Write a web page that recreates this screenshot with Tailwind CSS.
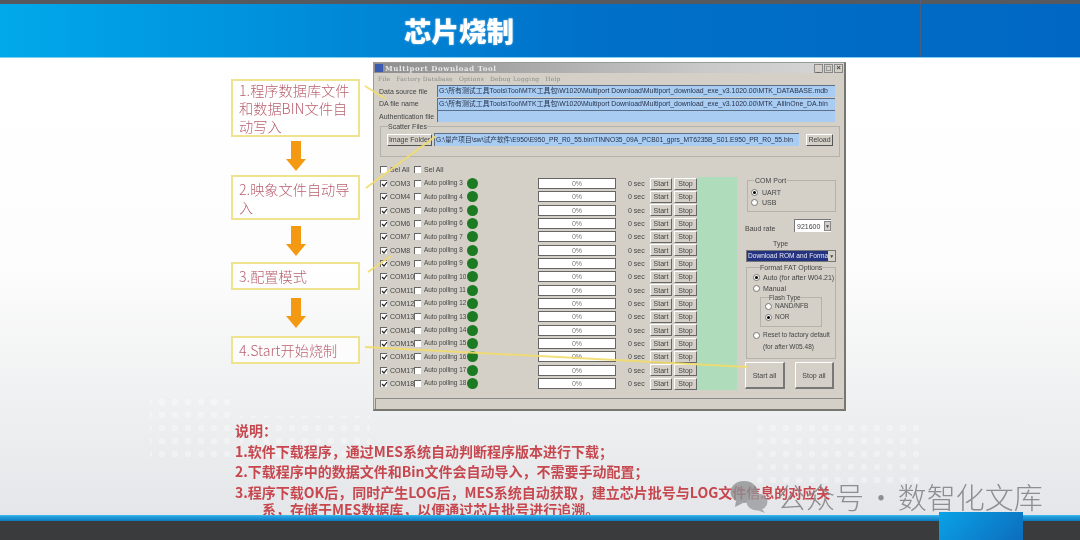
<!DOCTYPE html>
<html lang="zh">
<head>
<meta charset="utf-8">
<title>芯片烧制</title>
<script src="https://cdn.jsdelivr.net/npm/@tailwindcss/browser@4"></script>
</head>
<body class="m-0 bg-white">
<div class="relative w-[1080px] h-[540px] overflow-hidden flex flex-col font-['Liberation_Sans','Noto_Sans_CJK_SC',sans-serif]">
  <!-- top strip -->
  <div class="h-[4px] shrink-0 bg-[#565a5e]"></div>
  <!-- header -->
  <header class="relative h-[54px] shrink-0 border-b border-[#7fd0f0] bg-[linear-gradient(90deg,#00a9ea_0%,#0090dc_25%,#0070c8_55%,#0068c4_100%)] flex items-center pl-[404px]">
    <h1 class="text-[27.5px] leading-none font-black text-white font-['Noto_Sans_CJK_SC',sans-serif] [text-shadow:0_0_2px_rgba(255,255,255,.6)] blur-[0.4px]">芯片烧制</h1>
    <div class="absolute left-[920px] -top-[4px] bottom-0 w-[1px] bg-[#4a5f80]"></div>
  </header>

  <!-- slide body -->
  <main class="relative flex-1 min-h-0 overflow-hidden bg-[linear-gradient(180deg,#ffffff_0%,#fdfdfd_45%,#eeeff0_78%,#e5e6e9_100%)]">
    <svg class="absolute left-0 top-0" width="1080" height="460" aria-hidden="true">
      <defs><pattern id="d" width="13" height="13" patternUnits="userSpaceOnUse"><rect x="3" y="3" width="6" height="6" rx="2" fill="#ffffff" opacity=".3"/></pattern></defs>
      <rect x="150" y="340" width="80" height="60" fill="url(#d)"/>
      <rect x="240" y="358" width="130" height="50" fill="url(#d)"/>
      <rect x="750" y="360" width="170" height="70" fill="url(#d)"/>
    </svg>

    <div class="relative flex pl-[231px] h-[369px]">
      <!-- callouts column -->
      <div class="w-[129px] pt-[21px] flex flex-col items-center font-['Noto_Sans_CJK_SC',sans-serif] font-light text-[14.2px] leading-[18px] text-[#b9616f] blur-[0.3px]">
        <div class="w-full h-[58px] border-2 border-[#efe38e] bg-white/70 pl-[6px] pr-0 flex items-center">1.程序数据库文件和数据BIN文件自动写入</div>
        <div class="h-[38px] flex items-center"><svg width="20" height="30" viewBox="0 0 20 30"><path d="M5 0h10v18h5L10 30 0 18h5z" fill="#f39a12"/></svg></div>
        <div class="w-full h-[45px] border-2 border-[#efe38e] bg-white/70 pl-[6px] pr-0 flex items-center">2.映象文件自动导入</div>
        <div class="h-[42px] flex items-center"><svg width="20" height="30" viewBox="0 0 20 30"><path d="M5 0h10v18h5L10 30 0 18h5z" fill="#f39a12"/></svg></div>
        <div class="w-full h-[28px] border-2 border-[#efe38e] bg-white/70 pl-[6px] pr-0 flex items-center">3.配置模式</div>
        <div class="h-[46px] flex items-center"><svg width="20" height="30" viewBox="0 0 20 30"><path d="M5 0h10v18h5L10 30 0 18h5z" fill="#f39a12"/></svg></div>
        <div class="w-full h-[28px] border-2 border-[#efe38e] bg-white/70 pl-[6px] pr-0 flex items-center">4.Start开始烧制</div>
      </div>

      <!-- tool window -->
      <section class="ml-[13px] mt-[4px] w-[473px] h-[349px] shrink-0 bg-[#d4d0c8] border border-[#9a9a96] border-r-2 border-b-2 border-r-[#77776f] border-b-[#77776f] flex flex-col text-[7px] leading-none text-[#444] blur-[0.45px]">
        <div class="h-[10px] shrink-0 bg-[linear-gradient(90deg,#8e8e8e,#c9c9c9_70%,#d6d6d6)] flex items-center pl-[1px] pr-[1px]">
          <span class="w-[8px] h-[8px] bg-[#3a5bb0] mr-[2px]"></span>
          <span class="font-['DejaVu_Serif',serif] font-bold text-[7px] tracking-[0.6px] text-[#e8e8e8]">Multiport Download Tool</span>
          <span class="ml-auto flex gap-[1px]">
            <span class="w-[9px] h-[9px] bg-[#d4d0c8] border border-[#888] text-[7px] flex items-end justify-center">_</span>
            <span class="w-[9px] h-[9px] bg-[#d4d0c8] border border-[#888] flex items-center justify-center"><span class="w-[5px] h-[5px] border border-[#999]"></span></span>
            <span class="w-[9px] h-[9px] bg-[#d4d0c8] border border-[#888] text-[8px] font-bold flex items-center justify-center">×</span>
          </span>
        </div>
        <div class="h-[11px] shrink-0 flex items-center pl-[4px] gap-[6px] font-['DejaVu_Serif',serif] text-[6px] tracking-[0.2px] text-[#8a8a86]">
          <span>File</span><span>Factory Database</span><span>Options</span><span>Debug Logging</span><span>Help</span>
        </div>
        <div class="flex flex-col pr-[9px] pt-[1px] gap-[0.5px] shrink-0">
          <div class="flex items-center h-[12px]"><span class="w-[63px] pl-[5px] shrink-0 whitespace-nowrap">Data source file</span><span class="flex-1 h-[12px] bg-[#a9cdf2] border-t border-l border-[#5d6f86] pl-[1px] flex items-center text-[6.9px] text-[#27324a] whitespace-nowrap overflow-hidden">G:\所有测试工具Tools\Tool\MTK工具包\W1020\Multiport Download\Multiport_download_exe_v3.1020.00\MTK_DATABASE.mdb</span></div>
          <div class="flex items-center h-[12px]"><span class="w-[63px] pl-[5px] shrink-0 whitespace-nowrap">DA file name</span><span class="flex-1 h-[12px] bg-[#a9cdf2] border-t border-l border-[#5d6f86] pl-[1px] flex items-center text-[6.9px] text-[#27324a] whitespace-nowrap overflow-hidden">G:\所有测试工具Tools\Tool\MTK工具包\W1020\Multiport Download\Multiport_download_exe_v3.1020.00\MTK_AllInOne_DA.bin</span></div>
          <div class="flex items-center h-[12px]"><span class="w-[63px] pl-[5px] shrink-0 whitespace-nowrap">Authentication file</span><span class="flex-1 h-[12px] bg-[#a9cdf2] border-t border-l border-[#5d6f86]"></span></div>
        </div>
        <fieldset class="ml-[6px] mr-[10px] mt-[1px] h-[34px] shrink-0 border border-[#b5b2aa] px-[6px]">
          <legend class="ml-[1px] leading-[7px] whitespace-nowrap">Scatter Files</legend>
          <div class="flex items-center mt-[3px]">
            <span class="w-[45px] h-[12px] shrink-0 bg-[#d4d0c8] border border-white border-r-[#555] border-b-[#555] flex items-center justify-center whitespace-nowrap">Image Folder</span>
            <span class="ml-[2px] w-[365px] h-[13px] shrink-0 bg-[#a9cdf2] border-t border-l border-[#5d6f86] pl-[1px] flex items-center text-[6.7px] text-[#27324a] whitespace-nowrap overflow-hidden">G:\量产项目\sw\试产软件\E950\E950_PR_R0_55.bin\TINNO35_09A_PCB01_gprs_MT6235B_S01.E950_PR_R0_55.bin</span>
            <span class="ml-[7px] w-[27px] h-[12px] shrink-0 bg-[#d4d0c8] border border-white border-r-[#555] border-b-[#555] flex items-center justify-center">Reload</span>
          </div>
        </fieldset>
        <div class="h-[10px] mt-[7px] shrink-0 flex items-center pl-[6px]">
          <span class="w-[7px] h-[7px] bg-white border-t border-l border-[#666]"></span><span class="ml-[3px] w-[24px]">Sel All</span>
          <span class="w-[7px] h-[7px] bg-white border-t border-l border-[#666]"></span><span class="ml-[3px]">Sel All</span>
        </div>
        <div class="flex mt-[3px] shrink-0">
          <div id="rows" class="w-[323px] shrink-0 pl-[6px] flex flex-col"></div>
          <div class="w-[40px] h-[213px] shrink-0 bg-[#afdcbb]"></div>
          <!-- right panel -->
          <div class="ml-[8px] w-[91px] shrink-0 flex flex-col">
            <fieldset class="ml-[2px] h-[35px] min-w-0 border border-[#b5b2aa] pl-[3px] pt-[3px]">
              <legend class="ml-[3px] px-[1px] leading-[7px]">COM Port</legend>
              <div class="flex items-center gap-[4px] h-[10px]"><span class="w-[7px] h-[7px] rounded-full bg-white border border-[#777] flex items-center justify-center"><span class="w-[3px] h-[3px] rounded-full bg-black"></span></span>UART</div>
              <div class="flex items-center gap-[4px] h-[10px]"><span class="w-[7px] h-[7px] rounded-full bg-white border border-[#777]"></span>USB</div>
            </fieldset>
            <div class="mt-[7px] flex items-center justify-between pr-[5px] h-[13px]">
              <span class="mt-[5px]">Baud rate</span>
              <span class="w-[37px] h-[13px] bg-white border-t border-l border-[#777] flex items-center pl-[2px]">921600<span class="ml-auto w-[7px] h-[10px] bg-[#d4d0c8] border border-[#888] text-[5px] flex items-center justify-center">▼</span></span>
            </div>
            <div class="mt-[8px] h-[8px] pl-[28px]">Type</div>
            <div class="mt-[2px] ml-[1px] h-[12px] w-[90px] bg-white border border-[#777] flex items-center">
              <span class="flex-1 h-full bg-[#23337f] text-[#e8e8f4] flex items-center pl-[1px] text-[6.6px] whitespace-nowrap">Download ROM and Forma</span>
              <span class="w-[8px] h-full bg-[#d4d0c8] text-[5px] flex items-center justify-center">▼</span>
            </div>
            <fieldset class="ml-[1px] mt-[2px] w-[90px] min-w-0 h-[95px] border border-[#b5b2aa] pl-[6px]">
              <legend class="ml-[7px] leading-[7px] whitespace-nowrap">Format FAT Options</legend>
              <div class="flex items-center gap-[3px] h-[11px] mt-[1px] whitespace-nowrap"><span class="w-[7px] h-[7px] rounded-full bg-white border border-[#777] flex items-center justify-center shrink-0"><span class="w-[3px] h-[3px] rounded-full bg-black"></span></span>Auto (for after W04.21)</div>
              <div class="flex items-center gap-[3px] h-[11px]"><span class="w-[7px] h-[7px] rounded-full bg-white border border-[#777] shrink-0"></span>Manual</div>
              <fieldset class="ml-[7px] w-[62px] min-w-0 h-[33px] border border-[#b5b2aa] pl-[4px] text-[6.5px]">
                <legend class="ml-[4px] leading-[7px] whitespace-nowrap">Flash  Type</legend>
                <div class="flex items-center gap-[3px] h-[11px]"><span class="w-[7px] h-[7px] rounded-full bg-white border border-[#777] shrink-0"></span>NAND/NFB</div>
                <div class="flex items-center gap-[3px] h-[10px]"><span class="w-[7px] h-[7px] rounded-full bg-white border border-[#777] shrink-0 flex items-center justify-center"><span class="w-[3px] h-[3px] rounded-full bg-black"></span></span>NOR</div>
              </fieldset>
              <div class="flex items-center gap-[3px] h-[11px] mt-[3px] text-[6.5px] whitespace-nowrap"><span class="w-[7px] h-[7px] rounded-full bg-white border border-[#777] shrink-0"></span>Reset to factory default</div>
              <div class="pl-[10px] mt-[3px] text-[6.5px] whitespace-nowrap">(for after W05.48)</div>
            </fieldset>
            <div class="mt-[3px] flex">
              <span class="w-[40px] h-[27px] bg-[#d4d0c8] border border-white border-r-2 border-b-2 border-r-[#777] border-b-[#777] flex items-center justify-center">Start all</span>
              <span class="ml-[10px] w-[39px] h-[27px] bg-[#d4d0c8] border border-white border-r-2 border-b-2 border-r-[#777] border-b-[#777] flex items-center justify-center">Stop all</span>
            </div>
          </div>
        </div>
        <div class="mt-[8px] mx-[1px] h-[11px] shrink-0 border-t border-l border-[#8a8a86]"></div>
      </section>
    </div>

    <!-- explanation -->
    <div class="mt-[-7px] pl-[235px] relative whitespace-nowrap font-['Noto_Sans_CJK_SC',sans-serif] font-bold text-[14px] leading-[20.5px] text-[#c7474f] blur-[0.35px]">
      <p>说明&#65306;</p>
      <p>1.软件下载程序&#65292;通过MES系统自动判断程序版本进行下载&#65307;</p>
      <p>2.下载程序中的数据文件和Bin文件会自动导入&#65292;不需要手动配置&#65307;</p>
      <p>3.程序下载OK后&#65292;同时产生LOG后&#65292;MES系统自动获取&#65292;建立芯片批号与LOG文件信息的对应关</p>
      <p class="pl-[27px] leading-[15px]">系&#65292;存储于MES数据库&#65292;以便通过芯片批号进行追溯&#12290;</p>
    </div>
  </main>

  <!-- footer -->
  <div class="h-[6px] shrink-0 border-t border-[#36b5ea] bg-[linear-gradient(180deg,#2ba6e4,#0b78be)]"></div>
  <div class="h-[19px] shrink-0 bg-[#3a3b3c]"></div>

  <!-- footer tab -->
  <div class="absolute left-[939px] top-[512px] w-[84px] h-[28px] bg-[linear-gradient(135deg,#0aa2e6,#0c6dbd)]"></div>

  <!-- leader lines over the slide -->
  <svg class="absolute left-0 top-0 pointer-events-none blur-[0.5px]" width="1080" height="540" aria-hidden="true">
    <g stroke="#f2dc6a" stroke-width="2" fill="none" opacity=".9">
      <line x1="365" y1="86" x2="386" y2="99"/>
      <line x1="366" y1="188" x2="436" y2="136"/>
      <line x1="368" y1="272" x2="391" y2="256"/>
      <line x1="365" y1="347" x2="748" y2="367"/>
    </g>
  </svg>

  <!-- watermark -->
  <div class="absolute left-[730px] top-[479px] flex items-center text-[#8d8e90] font-['Noto_Sans_CJK_SC',sans-serif] font-light text-[29px] leading-[34px] whitespace-nowrap blur-[0.3px]">
    <svg width="38" height="33" viewBox="0 0 38 33" class="mr-[9px] opacity-80"><ellipse cx="14" cy="12" rx="13.5" ry="11" fill="#8f9093"/><path d="M6 21l-1 6 8-4z" fill="#8f9093"/><ellipse cx="27" cy="22" rx="10.5" ry="8.5" fill="#9a9b9e"/><path d="M32 29l3 4-8-3z" fill="#9a9b9e"/></svg>
    <span class="[word-spacing:-4px]">公众号 · 数智化文库</span>
  </div>
</div>
<script>
var html = '';
for (var n = 3; n <= 18; n++) {
  html += '<div class="h-[13.33px] flex items-center">'
    + '<span class="relative w-[7px] h-[7px] shrink-0 bg-white border-t border-l border-[#666]"><svg class="absolute left-0 top-0" width="7" height="7" viewBox="0 0 7 7"><path d="M1 3l2 2 3-4" stroke="#222" stroke-width="1.2" fill="none"/></svg></span>'
    + '<span class="ml-[3px] w-[24px] shrink-0 whitespace-nowrap">COM' + n + '</span>'
    + '<span class="w-[7px] h-[7px] shrink-0 bg-white border-t border-l border-[#666]"></span>'
    + '<span class="ml-[3px] w-[43px] shrink-0 whitespace-nowrap text-[6.4px]">Auto polling ' + n + '</span>'
    + '<span class="w-[11px] h-[11px] shrink-0 rounded-full bg-[#1c7a22]"></span>'
    + '<span class="ml-[60px] w-[78px] h-[11px] shrink-0 bg-white border border-[#666] flex items-center justify-center text-[#777]">0%</span>'
    + '<span class="ml-[12px] w-[22px] shrink-0">0 sec</span>'
    + '<span class="w-[22px] h-[12px] shrink-0 bg-[#d4d0c8] border border-white border-r-[#666] border-b-[#666] flex items-center justify-center">Start</span>'
    + '<span class="ml-[2px] w-[23px] h-[12px] shrink-0 bg-[#d4d0c8] border border-white border-r-[#666] border-b-[#666] flex items-center justify-center">Stop</span>'
    + '</div>';
}
document.getElementById('rows').innerHTML = html;
</script>
</body>
</html>
